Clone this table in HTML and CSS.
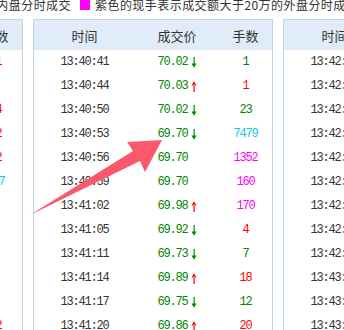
FILE: index.html
```html
<!DOCTYPE html>
<html lang="zh">
<head>
<meta charset="utf-8">
<link rel="stylesheet" href="styles.css">
</head>
<body>
<div class="page">
  <div class="legend">
    <span class="legend-cut"><span>绿色的现手表示成交额大于20万的内盘分时成交</span></span>
    <span class="swatch"></span>
    <span class="legend-text">紫色的现手表示成交额大于20万的外盘分时成交</span>
  </div>

  <div class="panels">
    <div class="panel">
      <div class="row head"><span>时间</span><span>成交价</span><span>手数</span></div>
      <div class="row"><span class="t">13:39:44</span><span class="p">70.05<i class="ar"></i></span><span class="q red">21</span></div>
      <div class="row"><span class="t">13:39:47</span><span class="p">70.05<i class="ar"></i></span><span class="q green">3</span></div>
      <div class="row"><span class="t">13:39:50</span><span class="p">70.06<i class="ar"></i></span><span class="q red">14</span></div>
      <div class="row"><span class="t">13:39:53</span><span class="p">70.06<i class="ar"></i></span><span class="q red">12</span></div>
      <div class="row"><span class="t">13:39:56</span><span class="p">70.07<i class="ar"></i></span><span class="q red">22</span></div>
      <div class="row"><span class="t">13:39:59</span><span class="p">70.03<i class="ar"></i></span><span class="q cyan">317</span></div>
      <div class="row"><span class="t">13:40:02</span><span class="p">70.03<i class="ar"></i></span><span class="q green">5</span></div>
      <div class="row"><span class="t">13:40:05</span><span class="p">70.02<i class="ar"></i></span><span class="q green">2</span></div>
      <div class="row"><span class="t">13:40:11</span><span class="p">70.02<i class="ar"></i></span><span class="q green">1</span></div>
      <div class="row"><span class="t">13:40:14</span><span class="p">70.02<i class="ar"></i></span><span class="q red">6</span></div>
      <div class="row"><span class="t">13:40:17</span><span class="p">70.03<i class="ar"></i></span><span class="q green">3</span></div>
      <div class="row"><span class="t">13:40:35</span><span class="p">70.03<i class="ar"></i></span><span class="q red">12</span></div>
    </div>

    <div class="panel">
      <div class="row head"><span>时间</span><span>成交价</span><span>手数</span></div>
      <div class="row"><span class="t">13:40:41</span><span class="p">70.02<svg class="ar" viewBox="0 0 6 11"><path class="dn" d="M2.5 0h1.2v7.5h-1.2z M0.5 6.5h5L3 10.8z"/></svg></span><span class="q green">1</span></div>
      <div class="row"><span class="t">13:40:44</span><span class="p">70.03<svg class="ar" viewBox="0 0 6 11"><path class="up" d="M2.5 3.5h1.2V11h-1.2z M0.5 4.5h5L3 0.2z"/></svg></span><span class="q red">1</span></div>
      <div class="row"><span class="t">13:40:50</span><span class="p">70.02<svg class="ar" viewBox="0 0 6 11"><path class="dn" d="M2.5 0h1.2v7.5h-1.2z M0.5 6.5h5L3 10.8z"/></svg></span><span class="q green">23</span></div>
      <div class="row"><span class="t">13:40:53</span><span class="p">69.70<svg class="ar" viewBox="0 0 6 11"><path class="dn" d="M2.5 0h1.2v7.5h-1.2z M0.5 6.5h5L3 10.8z"/></svg></span><span class="q cyan">7479</span></div>
      <div class="row"><span class="t">13:40:56</span><span class="p">69.70<i class="ar"></i></span><span class="q magenta">1352</span></div>
      <div class="row"><span class="t">13:40:59</span><span class="p">69.70<i class="ar"></i></span><span class="q magenta">160</span></div>
      <div class="row"><span class="t">13:41:02</span><span class="p">69.98<svg class="ar" viewBox="0 0 6 11"><path class="up" d="M2.5 3.5h1.2V11h-1.2z M0.5 4.5h5L3 0.2z"/></svg></span><span class="q magenta">170</span></div>
      <div class="row"><span class="t">13:41:05</span><span class="p">69.92<svg class="ar" viewBox="0 0 6 11"><path class="dn" d="M2.5 0h1.2v7.5h-1.2z M0.5 6.5h5L3 10.8z"/></svg></span><span class="q red">4</span></div>
      <div class="row"><span class="t">13:41:11</span><span class="p">69.73<svg class="ar" viewBox="0 0 6 11"><path class="dn" d="M2.5 0h1.2v7.5h-1.2z M0.5 6.5h5L3 10.8z"/></svg></span><span class="q green">7</span></div>
      <div class="row"><span class="t">13:41:14</span><span class="p">69.89<svg class="ar" viewBox="0 0 6 11"><path class="up" d="M2.5 3.5h1.2V11h-1.2z M0.5 4.5h5L3 0.2z"/></svg></span><span class="q red">18</span></div>
      <div class="row"><span class="t">13:41:17</span><span class="p">69.75<svg class="ar" viewBox="0 0 6 11"><path class="dn" d="M2.5 0h1.2v7.5h-1.2z M0.5 6.5h5L3 10.8z"/></svg></span><span class="q green">12</span></div>
      <div class="row"><span class="t">13:41:20</span><span class="p">69.86<svg class="ar" viewBox="0 0 6 11"><path class="up" d="M2.5 3.5h1.2V11h-1.2z M0.5 4.5h5L3 0.2z"/></svg></span><span class="q red">20</span></div>
    </div>

    <div class="panel">
      <div class="row head"><span>时间</span><span>成交价</span><span>手数</span></div>
      <div class="row"><span class="t">13:42:02</span><span class="p">69.80<i class="ar"></i></span><span class="q green">5</span></div>
      <div class="row"><span class="t">13:42:05</span><span class="p">69.80<i class="ar"></i></span><span class="q red">3</span></div>
      <div class="row"><span class="t">13:42:08</span><span class="p">69.81<i class="ar"></i></span><span class="q red">10</span></div>
      <div class="row"><span class="t">13:42:14</span><span class="p">69.80<i class="ar"></i></span><span class="q green">2</span></div>
      <div class="row"><span class="t">13:42:17</span><span class="p">69.80<i class="ar"></i></span><span class="q green">6</span></div>
      <div class="row"><span class="t">13:42:23</span><span class="p">69.82<i class="ar"></i></span><span class="q red">15</span></div>
      <div class="row"><span class="t">13:42:29</span><span class="p">69.81<i class="ar"></i></span><span class="q green">4</span></div>
      <div class="row"><span class="t">13:42:35</span><span class="p">69.81<i class="ar"></i></span><span class="q red">8</span></div>
      <div class="row"><span class="t">13:42:50</span><span class="p">69.83<i class="ar"></i></span><span class="q red">11</span></div>
      <div class="row"><span class="t">13:43:02</span><span class="p">69.83<i class="ar"></i></span><span class="q green">1</span></div>
      <div class="row"><span class="t">13:43:08</span><span class="p">69.84<i class="ar"></i></span><span class="q red">9</span></div>
      <div class="row"><span class="t">13:43:14</span><span class="p">69.84<i class="ar"></i></span><span class="q green">2</span></div>
    </div>
  </div>

  <svg class="pointer" width="344" height="330" viewBox="0 0 344 330">
    <polygon points="30,215 133,151 127,142 162,140 145,172 140,161" />
  </svg>
</div>
</body>
</html>
```

FILE: styles.css
```css
html, body {
  margin: 0;
  padding: 0;
  background: #ffffff;
}

.page {
  position: relative;
  width: 344px;
  height: 330px;
  overflow: hidden;
  font-family: "Noto Sans CJK SC", sans-serif;
  color: #333333;
}

.legend {
  display: flex;
  align-items: center;
  height: 19px;
  margin-top: -5px;
  font-size: 12px;
  line-height: 19px;
  letter-spacing: 0.45px;
  white-space: nowrap;
}

.legend-cut {
  display: flex;
  justify-content: flex-end;
  width: 71px;
  overflow: hidden;
  flex: none;
}

.swatch {
  flex: none;
  width: 10px;
  height: 10px;
  margin-left: 9px;
  margin-right: 5px;
  background: #ff00ff;
}

.legend-text {
  flex: none;
}

.panels {
  display: flex;
  gap: 10px;
  margin-top: 5px;
  margin-left: -217px;
}

.panel {
  flex: none;
  width: 238px;
  height: 330px;
  border: 1px solid #bcd3e8;
  border-bottom: none;
}

.row {
  display: grid;
  grid-template-columns: 101px 84px 53px;
  height: 24px;
  align-items: center;
  text-align: center;
  font-family: "Liberation Mono", monospace;
  font-size: 12px;
  letter-spacing: -1.2px;
}

.row.head {
  height: 30px;
  background: #e0ecf7;
  font-family: "Noto Sans CJK SC", sans-serif;
  font-size: 13px;
  letter-spacing: 0;
  color: #333333;
}

.t {
  color: #333333;
}

.p {
  display: flex;
  justify-content: center;
  align-items: center;
  gap: 3px;
  color: #008800;
}

.ar {
  display: block;
  width: 6px;
  height: 11px;
  flex: none;
}

.up {
  fill: #ff0000;
}

.dn {
  fill: #008800;
}

.q.green {
  color: #008800;
}

.q.red {
  color: #ff0000;
}

.q.cyan {
  color: #1cc3e6;
}

.q.magenta {
  color: #ff00ff;
}

.pointer {
  position: absolute;
  left: 0;
  top: 0;
}

.pointer polygon {
  fill: #fb586b;
}
```
